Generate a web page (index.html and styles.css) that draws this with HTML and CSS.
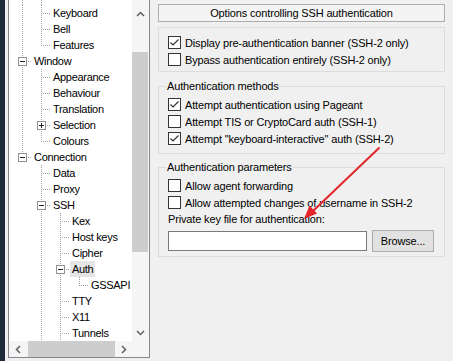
FILE: index.html
```html
<!DOCTYPE html>
<html>
<head>
<meta charset="utf-8">
<link rel="stylesheet" href="styles.css">
</head>
<body>
<div class="window">
  <div class="edge"></div>
  <div class="tree">
    <div class="tree-main">
      <div class="tree-rows">
        <div class="row stub"><span class="c pipe"></span><span class="c pipe"></span></div>
        <div class="row"><span class="c pipe"></span><span class="c tee"></span><span class="lbl">Keyboard</span></div>
        <div class="row"><span class="c pipe"></span><span class="c tee"></span><span class="lbl">Bell</span></div>
        <div class="row"><span class="c pipe"></span><span class="c ell"></span><span class="lbl">Features</span></div>
        <div class="row"><span class="c tee"><i class="box minus"></i></span><span class="lbl">Window</span></div>
        <div class="row"><span class="c pipe"></span><span class="c tee"></span><span class="lbl">Appearance</span></div>
        <div class="row"><span class="c pipe"></span><span class="c tee"></span><span class="lbl">Behaviour</span></div>
        <div class="row"><span class="c pipe"></span><span class="c tee"></span><span class="lbl">Translation</span></div>
        <div class="row"><span class="c pipe"></span><span class="c tee"><i class="box plus"></i></span><span class="lbl">Selection</span></div>
        <div class="row"><span class="c pipe"></span><span class="c ell"></span><span class="lbl">Colours</span></div>
        <div class="row"><span class="c ell"><i class="box minus"></i></span><span class="lbl">Connection</span></div>
        <div class="row"><span class="c"></span><span class="c tee"></span><span class="lbl">Data</span></div>
        <div class="row"><span class="c"></span><span class="c tee"></span><span class="lbl">Proxy</span></div>
        <div class="row"><span class="c"></span><span class="c tee"><i class="box minus"></i></span><span class="lbl">SSH</span></div>
        <div class="row"><span class="c"></span><span class="c pipe"></span><span class="c tee"></span><span class="lbl">Kex</span></div>
        <div class="row"><span class="c"></span><span class="c pipe"></span><span class="c tee"></span><span class="lbl">Host keys</span></div>
        <div class="row"><span class="c"></span><span class="c pipe"></span><span class="c tee"></span><span class="lbl">Cipher</span></div>
        <div class="row"><span class="c"></span><span class="c pipe"></span><span class="c tee"><i class="box minus"></i></span><span class="lbl sel">Auth</span></div>
        <div class="row"><span class="c"></span><span class="c pipe"></span><span class="c pipe"></span><span class="c ell"></span><span class="lbl">GSSAPI</span></div>
        <div class="row"><span class="c"></span><span class="c pipe"></span><span class="c tee"></span><span class="lbl">TTY</span></div>
        <div class="row"><span class="c"></span><span class="c pipe"></span><span class="c tee"></span><span class="lbl">X11</span></div>
        <div class="row"><span class="c"></span><span class="c pipe"></span><span class="c tee"></span><span class="lbl">Tunnels</span></div>
      </div>
      <div class="vscroll">
        <div class="sb-btn"><svg width="9" height="6" viewBox="0 0 9 6"><polyline points="1,5 4.5,1.5 8,5" fill="none" stroke="#606060" stroke-width="1.5"/></svg></div>
        <div class="vthumb"></div>
        <div class="sb-fill"></div>
        <div class="sb-btn"><svg width="9" height="6" viewBox="0 0 9 6"><polyline points="1,1 4.5,4.5 8,1" fill="none" stroke="#606060" stroke-width="1.5"/></svg></div>
      </div>
    </div>
    <div class="hscroll">
      <div class="hb-btn"><svg width="6" height="9" viewBox="0 0 6 9"><polyline points="5,1 1.5,4.5 5,8" fill="none" stroke="#606060" stroke-width="1.5"/></svg></div>
      <div class="hthumb"></div>
      <div class="hb-btn"><svg width="6" height="9" viewBox="0 0 6 9"><polyline points="1,1 4.5,4.5 1,8" fill="none" stroke="#606060" stroke-width="1.5"/></svg></div>
      <div class="corner"></div>
    </div>
  </div>

  <div class="panel">
    <div class="title-box">Options controlling SSH authentication</div>

    <div class="plain-group">
      <div class="chk"><svg class="cb" width="13" height="13" viewBox="0 0 13 13"><rect x="0.5" y="0.5" width="12" height="12" fill="#fff" stroke="#333"/><polyline points="2.5,6.5 5,9 10.5,3.5" fill="none" stroke="#333" stroke-width="1.2"/></svg><span>Display pre-authentication banner (SSH-2 only)</span></div>
      <div class="chk"><svg class="cb" width="13" height="13" viewBox="0 0 13 13"><rect x="0.5" y="0.5" width="12" height="12" fill="#fff" stroke="#333"/></svg><span>Bypass authentication entirely (SSH-2 only)</span></div>
    </div>

    <fieldset class="group methods">
      <legend>Authentication methods</legend>
      <div class="chk"><svg class="cb" width="13" height="13" viewBox="0 0 13 13"><rect x="0.5" y="0.5" width="12" height="12" fill="#fff" stroke="#333"/><polyline points="2.5,6.5 5,9 10.5,3.5" fill="none" stroke="#333" stroke-width="1.2"/></svg><span>Attempt authentication using Pageant</span></div>
      <div class="chk"><svg class="cb" width="13" height="13" viewBox="0 0 13 13"><rect x="0.5" y="0.5" width="12" height="12" fill="#fff" stroke="#333"/></svg><span>Attempt TIS or CryptoCard auth (SSH-1)</span></div>
      <div class="chk"><svg class="cb" width="13" height="13" viewBox="0 0 13 13"><rect x="0.5" y="0.5" width="12" height="12" fill="#fff" stroke="#333"/><polyline points="2.5,6.5 5,9 10.5,3.5" fill="none" stroke="#333" stroke-width="1.2"/></svg><span>Attempt "keyboard-interactive" auth (SSH-2)</span></div>
    </fieldset>

    <fieldset class="group params">
      <legend>Authentication parameters</legend>
      <div class="chk"><svg class="cb" width="13" height="13" viewBox="0 0 13 13"><rect x="0.5" y="0.5" width="12" height="12" fill="#fff" stroke="#333"/></svg><span>Allow agent forwarding</span></div>
      <div class="chk"><svg class="cb" width="13" height="13" viewBox="0 0 13 13"><rect x="0.5" y="0.5" width="12" height="12" fill="#fff" stroke="#333"/></svg><span>Allow attempted changes of username in SSH-2</span></div>
      <div class="label-row">Private key file for authentication:</div>
      <div class="file-row">
        <div class="text-input"></div>
        <div class="button">Browse...</div>
      </div>
    </fieldset>
  </div>
</div>
<svg class="annot" width="453" height="361" viewBox="0 0 453 361">
  <line x1="379" y1="148" x2="313" y2="211" stroke="#e3262b" stroke-width="2" stroke-linecap="round"/>
  <polygon points="304,219 309.5,205.5 317,213.5" fill="#e3262b"/>
</svg>
</body>
</html>
```
FILE: styles.css
```css
* { box-sizing: border-box; }
html, body { margin: 0; padding: 0; }
body {
  background: #f0f0f0;
  font-family: "Liberation Sans", Arial, sans-serif;
  font-size: 11px;
  letter-spacing: -0.15px;
  color: #000;
  width: 453px;
  height: 361px;
  overflow: hidden;
  position: relative;
}
.window {
  display: flex;
  align-items: flex-start;
  height: 361px;
}
.edge {
  width: 5px;
  height: 361px;
  background: #1f2b3d;
  margin-right: 3px;
  flex: none;
}
.tree {
  width: 142px;
  height: 358px;
  flex: none;
  background: #fff;
  border: 1px solid #828790;
  border-top: none;
  display: flex;
  flex-direction: column;
}
.tree-main {
  display: flex;
  height: 341px;
}
.tree-rows {
  width: 123px;
  padding-left: 3px;
  overflow: hidden;
}
.row {
  display: flex;
  height: 16px;
}
.row.stub { height: 5px; }
.c {
  width: 19px;
  flex: none;
  display: flex;
  align-items: flex-start;
  background-repeat: no-repeat;
}
.pipe {
  background-image: repeating-linear-gradient(180deg, #a0a0a0 0 1px, transparent 1px 2px);
  background-size: 1px 100%;
  background-position: 10px 0;
}
.tee {
  background-image: repeating-linear-gradient(180deg, #a0a0a0 0 1px, transparent 1px 2px),
                    repeating-linear-gradient(90deg, #a0a0a0 0 1px, transparent 1px 2px);
  background-size: 1px 100%, 9px 1px;
  background-position: 10px 0, 10px 8px;
}
.ell {
  background-image: repeating-linear-gradient(180deg, #a0a0a0 0 1px, transparent 1px 2px),
                    repeating-linear-gradient(90deg, #a0a0a0 0 1px, transparent 1px 2px);
  background-size: 1px 8px, 9px 1px;
  background-position: 10px 0, 10px 8px;
}
.box {
  display: block;
  width: 9px;
  height: 9px;
  margin: 4px 0 0 6px;
  border: 1px solid #919191;
  background-color: #fff;
  background-repeat: no-repeat;
}
.box.minus {
  background-image: linear-gradient(#222, #222);
  background-size: 5px 1px;
  background-position: center;
}
.box.plus {
  background-image: linear-gradient(#222, #222), linear-gradient(#222, #222);
  background-size: 5px 1px, 1px 5px;
  background-position: center, center;
}
.lbl {
  line-height: 16px;
  padding: 0 2px;
  margin-left: 1px;
  white-space: nowrap;
  letter-spacing: -0.3px;
}
.lbl.sel { background: #e5e5e5; }

.vscroll {
  width: 17px;
  background: #f5f5f5;
  display: flex;
  flex-direction: column;
  padding-top: 5px;
}
.sb-btn {
  height: 17px;
  display: flex;
  align-items: center;
  justify-content: center;
  flex: none;
}
.vthumb {
  margin: 30px 1px 0 0;
  height: 200px;
  background: #cdcdcd;
  flex: none;
}
.sb-fill { flex: 1; }
.hscroll {
  height: 16px;
  display: flex;
  background: #f5f5f5;
}
.hb-btn {
  width: 17px;
  display: flex;
  align-items: center;
  justify-content: center;
  flex: none;
}
.hthumb {
  width: 87px;
  margin: 0 0 0 2px;
  background: #cdcdcd;
  flex: none;
}
.corner {
  width: 17px;
  flex: none;
  background: #f5f5f5;
}

.panel {
  margin-left: 8px;
  width: 287px;
  padding-top: 4px;
  display: flex;
  flex-direction: column;
  flex: none;
}
.title-box {
  height: 18px;
  border: 1px solid #adadad;
  background: #f4f4f4;
  text-align: center;
  line-height: 16px;
}
.plain-group {
  margin-top: 5px;
  border: 1px solid #dcdcdc;
  padding: 6px 0 3px 9px;
}
.group {
  margin: 7px 0 0;
  border: 1px solid #dcdcdc;
  padding: 2px 0 6px 9px;
  min-width: 0;
}
.group.params {
  margin-top: 6px;
  padding-bottom: 4px;
}
.group legend {
  padding: 0 1px;
  margin-left: -2px;
  line-height: 15px;
}
.chk {
  display: flex;
  align-items: center;
  height: 17px;
  gap: 4px;
  white-space: nowrap;
}
.cb { flex: none; display: block; }
.label-row {
  height: 17px;
  line-height: 17px;
  white-space: nowrap;
}
.file-row {
  display: flex;
  align-items: center;
  height: 22px;
  margin-top: 2px;
}
.text-input {
  width: 199px;
  height: 20px;
  background: #fff;
  border: 1px solid #7a7a7a;
}
.button {
  width: 62px;
  height: 22px;
  margin-left: 5px;
  background: #e1e1e1;
  border: 1px solid #adadad;
  text-align: center;
  line-height: 20px;
}
.annot {
  position: absolute;
  left: 0;
  top: 0;
  pointer-events: none;
}
```
